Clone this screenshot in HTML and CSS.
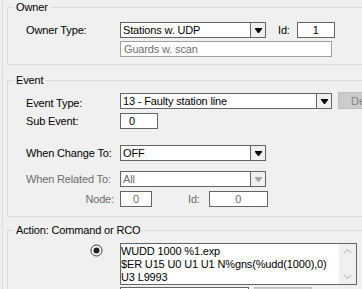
FILE: index.html
```html
<!DOCTYPE html>
<html lang="en">
<head>
  <meta charset="UTF-8">
  <title>Event Action</title>
  <link rel="stylesheet" href="styles.css">
</head>
<body>
  <div class="panel">

    <fieldset class="group group-owner">
      <legend>Owner</legend>
      <div class="row">
        <span class="label">Owner Type:</span>
        <div class="combo w146">
          <span class="combo-text">Stations w. UDP</span>
          <span class="combo-btn">
            <svg width="7" height="5" viewBox="0 0 7 5"><polygon points="0,0 7,0 7,1 4,5 3,5 0,1" fill="#000"/></svg>
          </span>
        </div>
        <span class="label-id">Id:</span>
        <div class="field w38 center">1</div>
      </div>
      <div class="row row-gap3">
        <span class="label"></span>
        <div class="field w212 disabled">Guards w. scan</div>
      </div>
    </fieldset>

    <fieldset class="group group-event">
      <legend>Event</legend>
      <div class="row row-tall">
        <span class="label">Event Type:</span>
        <div class="combo w212">
          <span class="combo-text">13 - Faulty station line</span>
          <span class="combo-btn">
            <svg width="7" height="5" viewBox="0 0 7 5"><polygon points="0,0 7,0 7,1 4,5 3,5 0,1" fill="#000"/></svg>
          </span>
        </div>
        <button class="btn btn-disabled" disabled>De</button>
      </div>
      <div class="row row-gap4">
        <span class="label">Sub Event:</span>
        <div class="field w38 pad-num">0</div>
      </div>
      <div class="row row-gap16">
        <span class="label">When Change To:</span>
        <div class="combo w146">
          <span class="combo-text">OFF</span>
          <span class="combo-btn">
            <svg width="7" height="5" viewBox="0 0 7 5"><polygon points="0,0 7,0 7,1 4,5 3,5 0,1" fill="#000"/></svg>
          </span>
        </div>
      </div>
      <div class="row row-gap10">
        <span class="label muted">When Related To:</span>
        <div class="combo w146 combo-disabled">
          <span class="combo-text">All</span>
          <span class="combo-btn">
            <svg width="7" height="5" viewBox="0 0 7 5"><polygon points="0,0 7,0 7,1 4,5 3,5 0,1" fill="#a6a6a6"/></svg>
          </span>
        </div>
      </div>
      <div class="row row-gap4">
        <span class="label label-right muted">Node:</span>
        <div class="field w32 center muted">0</div>
        <span class="label-node-id muted">Id:</span>
        <div class="field w59 center muted">0</div>
      </div>
    </fieldset>

    <fieldset class="group group-action">
      <legend>Action: Command or RCO</legend>
      <div class="row row-memo">
        <span class="label label-radio">
          <svg width="13" height="13" viewBox="0 0 13 13">
            <circle cx="6.5" cy="6.5" r="5.5" fill="#fff" stroke="#333" stroke-width="1"/>
            <circle cx="6.5" cy="6.5" r="3" fill="#222"/>
          </svg>
        </span>
        <div class="memo">
          <div class="memo-text">WUDD 1000 %1.exp<br>$ER U15 U0 U1 U1 N%gns(%udd(1000),0)<br>U3 L9993</div>
          <div class="memo-scroll">
            <svg width="9" height="6" viewBox="0 0 9 6"><polyline points="1,5 4.5,1.5 8,5" fill="none" stroke="#c2c2c2" stroke-width="1.2"/></svg>
            <svg width="9" height="6" viewBox="0 0 9 6"><polyline points="1,1 4.5,4.5 8,1" fill="none" stroke="#c2c2c2" stroke-width="1.2"/></svg>
          </div>
        </div>
      </div>
      <div class="row row-gap2">
        <span class="label"></span>
        <div class="field w129"></div>
        <button class="btn btn-small" disabled></button>
      </div>
    </fieldset>

  </div>
</body>
</html>
```

FILE: styles.css
```css
html, body {
  margin: 0;
  height: 289px;
  overflow: hidden;
}

body {
  background-color: #f0f0f0;
  color: #000;
  font-family: "Liberation Sans", Arial, sans-serif;
  font-size: 11px;
  letter-spacing: -0.15px;
}

.panel {
  margin-left: 2px;
  padding: 1px 0 0 4px;
  height: 289px;
  border-left: 1px solid #dcdcdc;
}

.group {
  margin: 0 -30px 0 0;
  padding: 8px 0 7px 6px;
  border: 1px solid #dcdcdc;
  min-width: 0;
}

.group legend {
  padding: 0 2px;
  line-height: 13px;
}

.group-event {
  margin-top: 9px;
  padding-top: 5px;
  padding-bottom: 9px;
}

.group-action {
  margin-top: 7px;
  padding-top: 6px;
}

.row {
  display: flex;
  align-items: center;
  height: 16px;
  padding-left: 12px;
}

.row-tall {
  height: 17px;
  align-items: flex-end;
}

.row-gap2 { margin-top: 2px; }
.row-gap3 { margin-top: 3px; }
.row-gap4 { margin-top: 4px; }
.row-gap10 { margin-top: 10px; }
.row-gap16 { margin-top: 16px; }

.label {
  flex: none;
  width: 94px;
  white-space: nowrap;
}

.label-right {
  text-align: right;
  width: 88px;
  margin-right: 6px;
}

.muted {
  color: #6d6d6d;
}

.label-id {
  margin: 0 7px 0 12px;
}

.label-node-id {
  margin: 0 9px 0 36px;
}

.field {
  box-sizing: border-box;
  height: 16px;
  line-height: 14px;
  padding: 0 3px;
  background-color: #fff;
  border: 1px solid #646464;
  white-space: nowrap;
  overflow: hidden;
}

.field.center {
  text-align: center;
}

.field.pad-num {
  padding-left: 8px;
}

.field.disabled {
  color: #6d6d6d;
  border-color: #a0a0a0;
}

.w32 { width: 32px; }
.w38 { width: 38px; }
.w59 { width: 59px; }
.w129 { width: 129px; }
.w146 { width: 146px; }
.w212 { width: 212px; }

.combo {
  box-sizing: border-box;
  display: flex;
  height: 16px;
  background-color: #fff;
  border: 1px solid #646464;
}

.combo-text {
  flex: 1;
  padding-left: 2px;
  line-height: 14px;
  white-space: nowrap;
  overflow: hidden;
}

.combo-btn {
  display: flex;
  align-items: center;
  justify-content: center;
  width: 14px;
  background-color: #f0f0f0;
  border-left: 1px solid #646464;
}

.combo-disabled .combo-text {
  color: #6d6d6d;
}

.btn {
  box-sizing: border-box;
  font-family: inherit;
  font-size: 11px;
  margin: 0;
}

.btn-disabled {
  flex: none;
  width: 24px;
  height: 17px;
  margin-left: 6px;
  padding: 0 0 0 12px;
  text-align: left;
  color: #838383;
  background-color: #cccccc;
  border: 1px solid #bfbfbf;
  border-right: none;
  overflow: hidden;
  white-space: nowrap;
}

.btn-small {
  flex: none;
  width: 58px;
  height: 16px;
  margin-left: 5px;
  align-self: flex-start;
  background-color: #cccccc;
  border: 1px solid #bfbfbf;
}

.row-memo {
  height: 42px;
  align-items: flex-start;
}

.label-radio {
  display: flex;
  justify-content: flex-end;
  padding: 1px 17px 0 0;
  width: 77px;
}

.memo {
  box-sizing: border-box;
  display: flex;
  width: 237px;
  height: 42px;
  background-color: #fff;
  border: 1px solid #646464;
}

.memo-text {
  flex: 1;
  padding: 1px 0 0 0;
  line-height: 13px;
  white-space: nowrap;
  overflow: hidden;
}

.memo-scroll {
  display: flex;
  flex-direction: column;
  justify-content: space-between;
  align-items: center;
  width: 17px;
  padding: 4px 0;
  background-color: #f0f0f0;
}
```
